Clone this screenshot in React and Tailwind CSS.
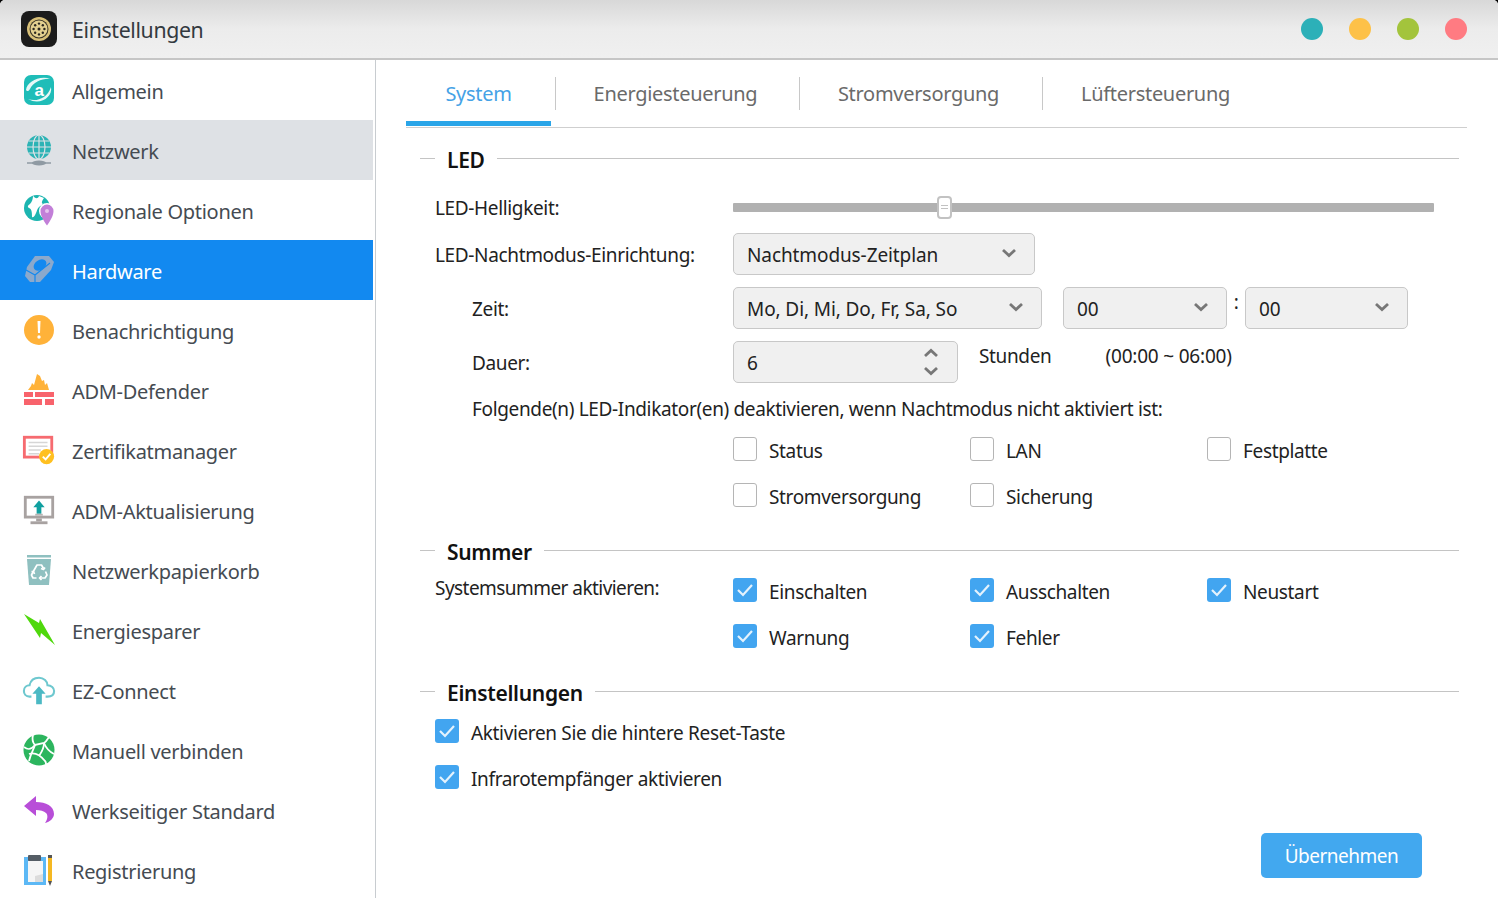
import React from "react";

const Logo = () => (
  <div className="w-9 h-9 rounded-lg bg-[#1c1c1c] flex items-center justify-center">
    <svg width="28" height="28" viewBox="0 0 28 28">
      <circle cx="14" cy="14" r="12" fill="#d8c078" />
      <circle cx="14" cy="14" r="9.500" fill="#3a3528" />
      <circle cx="14" cy="14" r="8.500" fill="#e3d090" />
      {[0, 45, 90, 135, 180, 225, 270, 315].map((a) => (
        <circle key={a} cx={14 + 5.4 * Math.cos((a * Math.PI) / 180)} cy={14 + 5.4 * Math.sin((a * Math.PI) / 180)} r="1.200" fill="#2b2820" />
      ))}
      <circle cx="14" cy="14" r="1.500" fill="#2b2820" />
    </svg>
  </div>
);

const icons = {
  allgemein: (
    <svg width="34" height="34" viewBox="0 0 34 34">
      <rect x="2" y="2" width="30" height="30" rx="7" fill="#1fbdb8" />
      <path d="M4 17C5 9 17 2 29 6C21 5 11 9 8 16C7 18 5 19 4 17Z" fill="#e6f8f7" />
      <path d="M6 26C14 29 25 26 29 14C31 24 18 33 6 26Z" fill="#e6f8f7" />
      <text x="17" y="23" textAnchor="middle" fontSize="17" fontWeight="700" fill="#fff" fontFamily="'Liberation Sans',sans-serif">a</text>
    </svg>
  ),
  netzwerk: (
    <svg width="34" height="34" viewBox="0 0 34 34">
      <circle cx="17" cy="14" r="12" fill="#2cb3b5" />
      <g stroke="#dee1e5" strokeWidth="1.200" fill="none">
        <ellipse cx="17" cy="14" rx="6" ry="12" />
        <path d="M17 2V26M5 14H29M6.500 8H27.500M6.500 20H27.500" />
      </g>
      <path d="M5 30H29" stroke="#8f9aa3" strokeWidth="1.500" />
      <ellipse cx="17" cy="30" rx="7" ry="2.500" fill="#8f9aa3" />
    </svg>
  ),
  regional: (
    <svg width="34" height="34" viewBox="0 0 34 34">
      <circle cx="15" cy="15" r="13" fill="#1cb5b0" />
      <path d="M11 2.500C13 6 16 6 17 3L22 5C20 8 19 10 21 11L17 14C15 16 15 18 14 20C13 22 12 25 10 24C10 20 10 16 7 15C5 14 6 12 8 11C10 9 11 6 11 2.500Z" fill="#fff" />
      <circle cx="25" cy="18" r="8" fill="#fff" />
      <path d="M25 32.500C21 27 18.500 22 18.500 18A6.500 6.500 0 0 1 31.500 18C31.500 22 29 27 25 32.500Z" fill="#c27fd8" />
      <circle cx="25" cy="18" r="2" fill="#e5c5ef" />
    </svg>
  ),
  hardware: (
    <svg width="34" height="34" viewBox="0 0 34 34">
      <path d="M13 3L27 3L32 9L29 17L18 29L8 29L3 23L5 14Z" fill="#8ba9cc" />
      <ellipse cx="18" cy="12" rx="7" ry="5" transform="rotate(-35 18 12)" fill="#1289f0" />
      <path d="M4 17L13 22L28 10M13 22L13 29" stroke="#1289f0" strokeWidth="1.200" fill="none" />
    </svg>
  ),
  benach: (
    <svg width="34" height="34" viewBox="0 0 34 34">
      <circle cx="17" cy="17" r="15" fill="#ffb239" />
      <path d="M15.500 8H18.500L18 20H16Z" fill="#fff" />
      <circle cx="17" cy="24" r="1.700" fill="#fff" />
    </svg>
  ),
  defender: (
    <svg width="34" height="34" viewBox="0 0 34 34">
      <path d="M6 17L9 13L10 10L12 12L15 1L18 3L20 8L22 7L23 12L25 10L27 17Z" fill="#ffb239" />
      <g fill="#f8636c">
        <rect x="2" y="19" width="9" height="5" />
        <rect x="13" y="19" width="19" height="5" />
        <rect x="2" y="26" width="18" height="6" />
        <rect x="23" y="26" width="9" height="6" />
      </g>
    </svg>
  ),
  zert: (
    <svg width="36" height="34" viewBox="0 0 36 34">
      <rect x="2.500" y="3.500" width="29" height="21" fill="#fff" stroke="#f66b70" strokeWidth="3" />
      <path d="M7 9H27M7 13H27M7 17H20M7 21H18" stroke="#d6d6d6" strokeWidth="1.500" />
      <circle cx="26" cy="24" r="8" fill="#ffc020" />
      <path d="M22 24L25 27L30 21" stroke="#fff" strokeWidth="2" fill="none" />
    </svg>
  ),
  update: (
    <svg width="36" height="34" viewBox="0 0 36 34">
      <rect x="3.500" y="3.500" width="29" height="21" fill="#fff" stroke="#a8a2a1" strokeWidth="3" />
      <path d="M18 7L24 14H20.500V21H15.500V14H12Z" fill="#10a0a0" />
      <path d="M14 22H22" stroke="#b8b4b3" strokeWidth="2" />
      <path d="M15 26H21V29H15Z" fill="#a8a2a1" />
      <rect x="9" y="29" width="18" height="3" fill="#a8a2a1" />
    </svg>
  ),
  trash: (
    <svg width="34" height="34" viewBox="0 0 34 34">
      <rect x="5" y="2" width="24" height="2.500" fill="#8fc0c0" />
      <path d="M5 6H29L27 32H7Z" fill="#8fc0c0" />
      <g fill="none" stroke="#fff" strokeWidth="1.700" strokeLinejoin="round">
        <path d="M11 19L15 12H19.500L21.500 15.500" />
        <path d="M23 14.500L21.500 16.500L19 15.500" />
        <path d="M23.500 18.500L25 22L23 25H18" />
        <path d="M19.500 27L17.500 25L19.500 23" />
        <path d="M14.500 25H11L9.500 22L11 19" />
        <path d="M9.500 18.500L11.500 18.500L12.500 21" />
      </g>
    </svg>
  ),
  energie: (
    <svg width="34" height="34" viewBox="0 0 34 34">
      <path d="M2 1L17 10L18 6L33 32L19 20L18 25Z" fill="#4fd80c" />
    </svg>
  ),
  ez: (
    <svg width="36" height="34" viewBox="0 0 36 34">
      <path d="M10 24H8C4 24 2 21 2 18C2 14 5 12 8 12C9 7 13 4 18 4C23 4 27 8 27 12C31 12 34 15 34 18C34 22 31 24 27 24H25" fill="none" stroke="#6ec8cf" strokeWidth="2.200" />
      <path d="M18 13L25 21H21V32H15V21H11Z" fill="#4bb9c4" />
    </svg>
  ),
  manuell: (
    <svg width="34" height="34" viewBox="0 0 34 34">
      <circle cx="17" cy="17" r="15.500" fill="#2cb55e" />
      <g stroke="#fff" strokeWidth="1.800" fill="none">
        <path d="M11 2C10 6 11 10 13 12L22 10C25 8 26 5 27 4" />
        <path d="M2 14C6 17 9 17 13 12" />
        <path d="M22 10C24 15 28 19 32 21" />
        <path d="M13 12C11 18 9 20 7 28" />
        <path d="M7 21C13 19 19 23 23 28C24 29 24 30 24 31" />
        <path d="M22 10C22 16 19 20 17 23" />
      </g>
    </svg>
  ),
  werk: (
    <svg width="34" height="34" viewBox="0 0 34 34">
      <path d="M2 13L14 3V9C24 9 32 13 32 21C32 25 28 29 23 30C26 26 26 22 24 20C22 18 18 17 14 17V23Z" fill="#b84ed8" />
    </svg>
  ),
  reg: (
    <svg width="34" height="34" viewBox="0 0 34 34">
      <rect x="2" y="4" width="22" height="28" fill="#5cb8f5" />
      <rect x="6" y="8" width="15" height="21" fill="#f5f5f5" />
      <path d="M13 29L13 23L21 21V29Z" fill="#dcdcdc" />
      <rect x="6" y="2" width="13" height="6" rx="1" fill="#555d65" />
      <rect x="26" y="2" width="4" height="3" fill="#555" />
      <rect x="26" y="5" width="4" height="23" fill="#f5b822" />
      <path d="M26 28H30L28 33Z" fill="#555" />
    </svg>
  ),
};

const items = [
  ["Allgemein", "allgemein"],
  ["Netzwerk", "netzwerk"],
  ["Regionale Optionen", "regional"],
  ["Hardware", "hardware"],
  ["Benachrichtigung", "benach"],
  ["ADM-Defender", "defender"],
  ["Zertifikatmanager", "zert"],
  ["ADM-Aktualisierung", "update"],
  ["Netzwerkpapierkorb", "trash"],
  ["Energiesparer", "energie"],
  ["EZ-Connect", "ez"],
  ["Manuell verbinden", "manuell"],
  ["Werkseitiger Standard", "werk"],
  ["Registrierung", "reg"],
];

const Chevron = ({ up }) => (
  <svg width="16" height="10" viewBox="0 0 16 10">
    <path d={up ? "M2 8L8 2.500L14 8" : "M2 2L8 7.500L14 2"} fill="none" stroke="#777" strokeWidth="2.800" />
  </svg>
);

const Select = ({ className, label }) => (
  <div className={`h-[42px] rounded-[5px] border border-[#c8c8c8] bg-[#f0f0f0] pl-[13px] pr-[17px] flex items-center justify-between text-[#222] tracking-[-0.1px] ${className}`}>
    <span className="relative top-[1px]">{label}</span>
    <div className="relative -top-[1px]">
      <Chevron />
    </div>
  </div>
);

const Check = ({ label, on, className = "w-[237px]" }) => (
  <div className={`flex items-center gap-3 h-6 ${className}`}>
    {on ? (
      <div className="w-6 h-6 rounded-[3px] bg-[#42a5f0] flex items-center justify-center">
        <svg width="18" height="16" viewBox="0 0 18 16">
          <path d="M2 8L7 13L16 3" fill="none" stroke="#e4f2fd" strokeWidth="2.200" />
        </svg>
      </div>
    ) : (
      <div className="w-6 h-6 rounded-[3px] border border-[#b5b5b5] bg-white" />
    )}
    <span className="text-[#222] relative top-[2px]">{label}</span>
  </div>
);

const Legend = ({ children, className }) => (
  <div className={`flex items-start h-[30px] ${className}`}>
    <div className="w-[15px] h-px bg-[#c4c4c4] mt-[8px]" />
    <div className="px-3 text-[21px] leading-[20px] font-semibold text-[#111] whitespace-nowrap tracking-[-0.3px]">{children}</div>
    <div className="flex-1 h-px bg-[#c4c4c4] mt-[8px]" />
  </div>
);

export default function App() {
  return (
    <div className="h-[898px] w-[1498px] bg-black overflow-hidden text-[19px] leading-[26px] font-['Noto_Sans','Open_Sans',sans-serif] tracking-[-0.35px]">
      <div className="h-full rounded-t-[5px] bg-white flex flex-col overflow-hidden">
        <header className="h-[60px] shrink-0 bg-gradient-to-b from-[#d8d8d8] via-[#ececec] to-[#f0f0f0] border-b-2 border-[#c6c6c6] pl-[21px] pr-[31px] flex items-center">
          <Logo />
          <div className="ml-[15px] text-[21.300px] text-[#333a40] relative top-[1px]">Einstellungen</div>
          <div className="ml-auto flex gap-[26px]">
            <div className="w-[22px] h-[22px] rounded-full bg-[#2cb0b8]" />
            <div className="w-[22px] h-[22px] rounded-full bg-[#fdc148]" />
            <div className="w-[22px] h-[22px] rounded-full bg-[#a3c43c]" />
            <div className="w-[22px] h-[22px] rounded-full bg-[#ff7b82]" />
          </div>
        </header>
        <div className="flex-1 flex min-h-0">
          <aside className="w-[376px] shrink-0 border-r border-[#c8ccd0] pr-[2px]">
            {items.map(([label, icon]) => (
              <div
                key={label}
                className={`h-[60px] flex items-center pl-[22px] ${
                  label === "Netzwerk" ? "bg-[#dee1e5]" : label === "Hardware" ? "bg-[#1289f0]" : ""
                }`}
              >
                <div className="w-[34px] h-[34px] flex items-center justify-center shrink-0">{icons[icon]}</div>
                <span className={`ml-4 relative top-[2px] text-[20px] tracking-[-0.3px] ${label === "Hardware" ? "text-white" : "text-[#454b52]"}`}>{label}</span>
              </div>
            ))}
          </aside>
          <main className="flex-1 min-w-0 pl-[30px] pr-[31px]">
            <div className="h-[68px] border-b border-[#cfcfcf] flex text-[20px] tracking-[-0.3px]">
              <div className="w-[145px] h-[66px] pt-[7px] border-b-[5px] border-[#2aa5e8] text-[#45a2e6] flex items-center justify-center">System</div>
              <div className="ml-[4px] w-[244px] h-[33px] mt-[17px] pr-[4px] border-l border-[#c8c8c8] text-[#6a6a6a] flex items-center justify-center">Energiesteuerung</div>
              <div className="w-[243px] h-[33px] mt-[17px] pr-[5px] border-l border-[#c8c8c8] text-[#6a6a6a] flex items-center justify-center">Stromversorgung</div>
              <div className="w-[226px] h-[33px] mt-[17px] border-l border-[#c8c8c8] text-[#6a6a6a] flex items-center justify-center">Lüftersteuerung</div>
            </div>
            <div className="pl-[14px] pr-[8px] pt-[22px]">
              <Legend>LED</Legend>
              <div className="pl-[15px] text-[#222]">
                <div className="flex items-center h-[34px] mt-[2px] pt-[8px] box-content">
                  <div className="w-[298px] relative top-[1px]">LED-Helligkeit:</div>
                  <div className="w-[701px] h-[9px] bg-[#b1b1b1] relative rounded-[1px]">
                    <div className="absolute left-[204px] -top-[7px] w-[15px] h-[23px] rounded-[4px] border-2 border-[#c2c2c2] bg-white flex flex-col items-center justify-center gap-[2px]">
                      <div className="w-[7px] h-px bg-[#c2c2c2]" />
                      <div className="w-[7px] h-px bg-[#c2c2c2]" />
                    </div>
                  </div>
                </div>
                <div className="flex items-center mt-[9px]">
                  <div className="w-[298px] relative top-[1px]">LED-Nachtmodus-Einrichtung:</div>
                  <Select className="w-[302px]" label="Nachtmodus-Zeitplan" />
                </div>
                <div className="flex items-center mt-[12px]">
                  <div className="w-[298px] pl-[37px] relative top-[1px]">Zeit:</div>
                  <Select className="w-[309px]" label="Mo, Di, Mi, Do, Fr, Sa, So" />
                  <Select className="w-[164px] ml-[21px]" label="00" />
                  <div className="w-[18px] text-center relative -top-[6px]">:</div>
                  <Select className="w-[163px]" label="00" />
                </div>
                <div className="flex items-center mt-[12px]">
                  <div className="w-[298px] pl-[37px] relative top-[1px]">Dauer:</div>
                  <div className="w-[225px] h-[42px] rounded-[5px] border border-[#c8c8c8] bg-[#f0f0f0] pl-[13px] pr-[18px] flex items-center justify-between">
                    <span className="relative top-[1px]">6</span>
                    <div className="flex flex-col gap-[8px]">
                      <Chevron up />
                      <Chevron />
                    </div>
                  </div>
                  <div className="ml-[21px] relative -top-[6px]">Stunden</div>
                  <div className="ml-[54px] relative -top-[6px] tracking-[-0.2px]">(00:00 ~ 06:00)</div>
                </div>
                <div className="pl-[37px] mt-[13px]">Folgende(n) LED-Indikator(en) deaktivieren, wenn Nachtmodus nicht aktiviert ist:</div>
                <div className="pl-[298px] mt-[15px] flex">
                  <Check label="Status" />
                  <Check label="LAN" />
                  <Check label="Festplatte" />
                </div>
                <div className="pl-[298px] mt-[22px] flex">
                  <Check label="Stromversorgung" />
                  <Check label="Sicherung" />
                </div>
              </div>
              <Legend className="mt-[35px]">Summer</Legend>
              <div className="pl-[15px] flex">
                <div className="w-[298px] text-[#222] relative top-[3px] tracking-[-0.55px]">Systemsummer aktivieren:</div>
                <div>
                  <div className="flex mt-[6px]">
                    <Check on label="Einschalten" />
                    <Check on label="Ausschalten" />
                    <Check on label="Neustart" />
                  </div>
                  <div className="flex mt-[22px]">
                    <Check on label="Warnung" />
                    <Check on label="Fehler" />
                  </div>
                </div>
              </div>
              <Legend className="mt-[35px]">Einstellungen</Legend>
              <div className="pl-[15px] mt-[6px]">
                <Check on className="w-auto" label="Aktivieren Sie die hintere Reset-Taste" />
                <Check on className="w-auto mt-[22px]" label="Infrarotempfänger aktivieren" />
              </div>
              <div className="flex justify-end mt-[44px] pr-[37px]">
                <div className="w-[161px] h-[45px] rounded-[5px] bg-[#42a8ef] text-white flex items-center justify-center tracking-[-0.5px]">Übernehmen</div>
              </div>
            </div>
          </main>
        </div>
      </div>
    </div>
  );
}
